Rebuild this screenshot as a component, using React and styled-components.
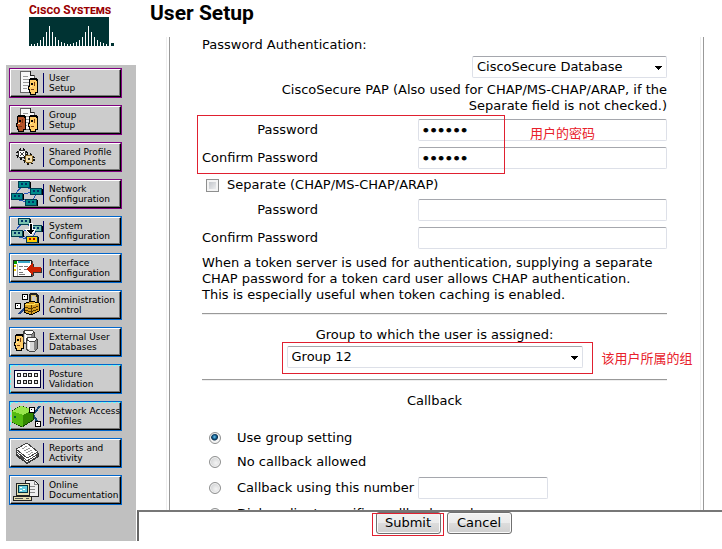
import React from "react";
import styled, { createGlobalStyle } from "styled-components";

const GlobalStyle = createGlobalStyle`
    * {
        box-sizing: border-box;
    }

    body {
        margin: 0;
        background: #fff;
        color: #000;
        font: 13px/16px "DejaVu Sans", sans-serif;
    }
`;

const bars = [2, 2, 3, 6, 9, 14, 20, 14, 9, 6, 4, 3, 2, 2, 3, 4, 6, 9, 14, 20, 14, 9, 6, 4, 3, 2];

const Face = ({ x, y, fill }) => (
    <g transform={`translate(${x} ${y})`}>
        <path d="M1 2h1V1h6v1h1v13H7v2H2v-2H1v-3H0V9h1z" fill={fill} stroke="#000" />
        <path d="M2 1h7v3H8V3H2zM3 6h2v2H3z" fill="#000" />
        <path d="M6 5h1v4H6zM3 12h3v1H3z" fill="#7a3a10" />
        <path d="M2 9h2v1H2z" fill="#ffe9a8" />
    </g>
);

const Sheet = ({ x, y }) => (
    <g transform={`translate(${x} ${y})`}>
        <path d="M1 1h10l4 4v17H1z" fill="#777" />
        <path d="M0 0h10l4 4v17H0z" fill="#f8f8f8" stroke="#666" />
        <path d="M10 0v4h4" fill="#ccc" stroke="#222" />
        <path d="M3 5h5M3 8h8M3 11h7M3 14h8M3 17h4" stroke="#999" />
    </g>
);

const Host = ({ x, y, fill = "#008c8c", eye = "#036" }) => (
    <g transform={`translate(${x} ${y})`}>
        <path d="M1 1h12v6H1z" fill="#000" />
        <path d="M0 0h11v6H0z" fill={fill} stroke="#003c50" />
        <path d="M3 2h2v2H3zM7 2h2v2H7z" fill={eye} />
    </g>
);

const Drum = ({ x, y }) => (
    <g transform={`translate(${x} ${y})`}>
        <path d="M0 2v10l3 2h6l2-2V2z" fill="#d8d8d8" stroke="#444" />
        <path d="M8 3h3v9l-3 1z" fill="#888" />
        <path d="M2 4h2v8H2z" fill="#fff" />
        <path d="M0 2l3-2h6l2 2-2 2H3z" fill="#fff" stroke="#444" />
    </g>
);

const icons = {
    user: (
        <>
            <Sheet x={9} y={1} />
            <Face x={17} y={7} fill="#ffcc66" />
        </>
    ),
    group: (
        <>
            <Sheet x={9} y={1} />
            <Face x={5} y={7} fill="#b5532a" />
            <path d="M14 10v13" stroke="#000" />
            <Face x={17} y={7} fill="#ffcc66" />
        </>
    ),
    gears: (
        <>
            <circle cx="11" cy="10" r="5" fill="none" stroke="#111" strokeWidth="2" strokeDasharray="2 2" />
            <circle cx="11" cy="10" r="4" fill="#fff" stroke="#333" />
            <path d="M9 8l4 4M13 8l-4 4" stroke="#444" />
            <circle cx="18" cy="15" r="5" fill="none" stroke="#111" strokeWidth="2" strokeDasharray="2 2" />
            <circle cx="18" cy="15" r="4" fill="#f3dfae" stroke="#886622" />
            <circle cx="18" cy="15" r="1" fill="#fff" stroke="#333" />
        </>
    ),
    network: (
        <>
            <path d="M12 5l12 5-18 5 14 7 6-10M4 13L12 4M5 18l14 4" fill="none" stroke="#2455b8" />
            <Host x={7} y={0} />
            <Host x={19} y={7} />
            <Host x={0} y={12} />
            <Host x={14} y={18} />
        </>
    ),
    system: (
        <>
            <path d="M12 5l12 5-18 5 14 7 6-10M4 13L12 4M5 18l14 4" fill="none" stroke="#2455b8" />
            <Host x={7} y={0} fill="#79bfae" />
            <Host x={19} y={7} fill="#79bfae" />
            <Host x={0} y={12} fill="#79bfae" />
            <Host x={15} y={18} fill="#ffcc00" eye="#b40000" />
            <path d="M18 5h3v6h4l-5 6-6-6h4z" fill="#000" stroke="#fff" />
        </>
    ),
    form: (
        <>
            <path d="M3 6h19v16H3z" fill="#555" />
            <path d="M2 5h18v16H2z" fill="#fff" stroke="#222" />
            <path d="M3 6h3v3H3z" fill="#009900" />
            <path d="M7 6h12v2H7z" fill="#39a7c8" />
            <path d="M3 10h2v2H3zM3 14h2v2H3z" fill="#e8c800" />
            <path d="M8 11h4M8 14h2M13 14h3M8 17h4M13 11h4M8 19h6" stroke="#777" />
            <path d="M6 9v12" stroke="#aaa" />
            <path d="M16 15l7-6v4h8v5h-8v4z" fill="#333" />
            <path d="M15 14l7-6v4h8v5h-8v4z" fill="#cc2200" />
        </>
    ),
    admin: (
        <>
            <path d="M11 2h5v5h-5zM4 11h5v5H4z" fill="#fff" stroke="#000" />
            <path d="M13 4h1v1h-1zM6 13h1v1H6z" fill="#000" />
            <path d="M8 22l10-11" stroke="#224488" strokeWidth="2" />
            <path d="M19 11V4l2-2h3l2 2v6" fill="none" stroke="#222" strokeWidth="3" />
            <path d="M20 11V4l2-1h2l1 2v6" fill="none" stroke="#ddc060" />
            <path d="M13 12l7-3 8 2v8l-8 4-7-3z" fill="#d8a020" stroke="#000" />
            <path d="M14 15l6 2 7-3M14 18l6 2 7-3M20 13v9" stroke="#5a3a00" fill="none" />
            <path d="M14 12l6 1 7-2" stroke="#ffdd55" fill="none" />
        </>
    ),
    external: (
        <>
            <Face x={3} y={4} fill="#ffcc66" />
            <Drum x={12} y={1} />
            <Drum x={15} y={8} />
        </>
    ),
    posture: (
        <>
            <path d="M4 5h26v17H4z" fill="#555" />
            <path d="M3 4h26v17H3z" fill="#fff" stroke="#000033" />
            {[6, 12, 17, 23].map((x) => (
                <g key={x}>
                    <path d={`M${x} 7h4v4h-4zM${x} 14h4v4h-4z`} fill="#222" />
                    <path d={`M${x + 1} 8h2v2h-2zM${x + 1} 15h2v2h-2z`} fill="#ddd" />
                </g>
            ))}
        </>
    ),
    profiles: (
        <>
            <path d="M19 15l10-12M20 8l7 12" stroke="#164a78" strokeWidth="2" />
            <path d="M1 8l9-5 12 4v10l-11 7-10-5z" fill="#338800" stroke="#114400" />
            <path d="M1 8l9-5 12 4-10 5z" fill="#99e64d" />
            <path d="M1 8l11 4v12L1 19z" fill="#55bb11" />
            <path d="M3 13h2v2H3z" fill="#063" />
            <path d="M18 4h5v5h-5zM24 18h5v5h-5z" fill="#fff" stroke="#000" />
            <path d="M20 6h1v1h-1zM26 20h1v1h-1z" fill="#000" />
        </>
    ),
    reports: (
        <>
            <path d="M5 10v6l11 8 12-7v-4z" fill="#333" />
            <path d="M5 13l11-6 11 9-11 7z" fill="#fff" stroke="#444" />
            <path d="M5 11l11-6 11 9-11 7z" fill="#fff" stroke="#444" />
            <path d="M5 9l11-6 11 9-11 6z" fill="#fff" stroke="#444" />
            <path d="M11 9l5-3M13 11l6-3M15 13l6-3M17 15l5-3" stroke="#999" />
        </>
    ),
    online: (
        <>
            <path d="M14 3h9l4 4v12H14z" fill="#eee" stroke="#222" />
            <path d="M23 3v4h4M17 9h7M17 12h7M17 15h7" stroke="#888" fill="none" />
            <path d="M5 6h13v12H5z" fill="#e6dfb0" stroke="#222" />
            <path d="M7 8h9v7H7z" fill="#66ccdd" stroke="#003344" />
            <path d="M9 10h2M12 12h2M9 13h2" stroke="#fff" />
            <path d="M2 19h18v4H2z" fill="#e6dfb0" stroke="#222" />
            <path d="M4 21h8M15 21h3" stroke="#555" />
        </>
    ),
};

const links = [
    { icon: "user", first: "User", second: "Setup", visited: true },
    { icon: "group", first: "Group", second: "Setup", visited: true },
    { icon: "gears", first: "Shared Profile", second: "Components", visited: true },
    { icon: "network", first: "Network", second: "Configuration", visited: true },
    { icon: "system", first: "System", second: "Configuration" },
    { icon: "form", first: "Interface", second: "Configuration" },
    { icon: "admin", first: "Administration", second: "Control" },
    { icon: "external", first: "External User", second: "Databases" },
    { icon: "posture", first: "Posture", second: "Validation", dotted: true },
    { icon: "profiles", first: "Network Access", second: "Profiles", dotted: true },
    { icon: "reports", first: "Reports and", second: "Activity" },
    { icon: "online", first: "Online", second: "Documentation" },
];

function Sidebar() {
    return (
        <StyledSidebar>
            <Brand>
                <BrandName>Cisco Systems</BrandName>
                <svg width="85" height="29" shapeRendering="crispEdges" aria-hidden="true">
                    <rect width="80" height="29" fill="#003333" />
                    {bars.map((h, i) => (
                        <rect key={i} x={2 + i * 3} y={29 - h} width="1" height={h} fill="#fff" />
                    ))}
                    <rect x="82" y="26" width="3" height="3" fill="#003333" />
                </svg>
            </Brand>
            <Nav>
                {links.map(({ icon, first, second, visited, dotted }) => (
                    <NavLink href="#" key={icon} $visited={visited}>
                        <NavFace $dotted={dotted}>
                            <svg width="32" height="26" shapeRendering="crispEdges" aria-hidden="true">
                                {icons[icon]}
                            </svg>
                            <NavText>{first}<br />{second}</NavText>
                        </NavFace>
                    </NavLink>
                ))}
            </Nav>
        </StyledSidebar>
    );
}

function Dropdown({ id, label, value, width }) {
    return (
        <SelectWrap $width={width}>
            <Select id={id} aria-label={label} defaultValue={value}>
                <option>{value}</option>
            </Select>
            <svg width="8" height="4" shapeRendering="crispEdges" aria-hidden="true">
                <path d="M0 0h8L4 4z" />
            </svg>
        </SelectWrap>
    );
}

function PasswordPair({ name, value }) {
    return (
        <Fields>
            <label htmlFor={name}>Password</label>
            <PasswordInput id={name} type="password" defaultValue={value} />
            <label htmlFor={`${name}-confirm`}>Confirm Password</label>
            <PasswordInput id={`${name}-confirm`} type="password" defaultValue={value} />
        </Fields>
    );
}

function App() {
    return (
        <>
            <GlobalStyle />
            <Page>
                <Sidebar />
                <Main>
                    <Title>User Setup</Title>
                    <Viewport>
                        <Frame>
                            <Cell>
                                <div>Password Authentication:</div>
                                <SourceRow>
                                    <Dropdown label="Password Authentication" value="CiscoSecure Database" width="195px" />
                                    <div>CiscoSecure PAP (Also used for CHAP/MS-CHAP/ARAP, if the Separate field is not checked.)</div>
                                </SourceRow>
                                <Marked>
                                    <PasswordPair name="pap" value="secret" />
                                    <PasswordMark />
                                    <PasswordNote>用户的密码</PasswordNote>
                                </Marked>
                                <Separate>
                                    <Tick id="separate" type="checkbox" />
                                    <label htmlFor="separate">Separate (CHAP/MS-CHAP/ARAP)</label>
                                </Separate>
                                <PasswordPair name="chap" />
                                <Help>
                                    When a token server is used for authentication, supplying a separate CHAP password for a token card user allows CHAP authentication.<br />
                                    This is especially useful when token caching is enabled.
                                </Help>
                                <Rule />
                                <GroupRow>
                                    <label htmlFor="group">Group to which the user is assigned:</label>
                                    <Marked>
                                        <Dropdown id="group" value="Group 12" width="296px" />
                                        <GroupMark />
                                        <GroupNote>该用户所属的组</GroupNote>
                                    </Marked>
                                </GroupRow>
                                <Rule />
                                <Heading>Callback</Heading>
                                <Options>
                                    <Option><Radio type="radio" name="callback" defaultChecked />Use group setting</Option>
                                    <Option><Radio type="radio" name="callback" />No callback allowed</Option>
                                    <OptionLine>
                                        <Option><Radio type="radio" name="callback" />Callback using this number</Option>
                                        <NumberInput type="text" aria-label="Callback number" />
                                    </OptionLine>
                                    <Option><Radio type="radio" name="callback" />Dialup client specifies callback number</Option>
                                </Options>
                            </Cell>
                        </Frame>
                    </Viewport>
                    <Actions>
                        <Marked>
                            <Button type="button">Submit</Button>
                            <SubmitMark />
                        </Marked>
                        <Button type="button">Cancel</Button>
                    </Actions>
                </Main>
            </Page>
        </>
    );
}

const Page = styled.div`
    display: grid;
    grid-template-columns: 130px minmax(0, 1fr);
    height: 100vh;
    padding: 0 0 8px 6px;
    overflow: hidden;
`;

const StyledSidebar = styled.aside`
    display: flex;
    flex-direction: column;
    min-height: 0;
`;

const Brand = styled.div`
    flex: none;
    height: 65px;
    padding: 2px 0 0 23px;

    svg {
        display: block;
    }
`;

const BrandName = styled.div`
    height: 15px;
    color: #990000;
    font: bold 12px/16px Roboto, "Liberation Sans", sans-serif;
    font-variant: small-caps;
    white-space: nowrap;
`;

const Nav = styled.nav`
    display: flex;
    flex: 1;
    flex-direction: column;
    align-items: flex-start;
    gap: 7px;
    padding: 3px;
    background: #c0c0c0;
`;

const NavLink = styled.a`
    width: 113px;
    height: 30px;
    border: 1px solid ${({ $visited }) => ($visited ? "#800080" : "#0066cc")};
    color: #000;
    text-decoration: none;
`;

const NavFace = styled.span`
    display: flex;
    align-items: center;
    height: 28px;
    border: 1px ${({ $dotted }) => ($dotted ? "dashed #66ffff" : "solid #fff")};
    border-right: 1px solid #000;
    border-bottom: 1px solid #000;
    background: #cccccc;
    box-shadow: inset -1px -1px 0 #777777;

    svg {
        flex: none;
        height: 26px;
    }
`;

const NavText = styled.span`
    padding-left: 5px;
    border-left: 1px solid #000066;
    font-size: 9px;
    line-height: 10px;
    white-space: nowrap;
`;

const Main = styled.main`
    display: flex;
    flex-direction: column;
    min-height: 0;
`;

const Title = styled.h1`
    flex: none;
    height: 37px;
    margin: 0;
    padding-left: 14px;
    font: bold 21px/26px Roboto, "Liberation Sans", sans-serif;
`;

const Viewport = styled.div`
    flex: 1;
    min-height: 0;
    padding: 0 18px 0 30px;
    overflow: hidden;
`;

// bordered table look: a light and a grey line on each side
const Frame = styled.div`
    padding: 0 2px;
    border-left: 1px solid #eeeeee;
    border-right: 1px solid #999999;
`;

const Cell = styled.form`
    padding: 0 33px 0 32px;
    border-left: 1px solid #999999;
    border-right: 1px solid #eeeeee;
`;

const SourceRow = styled.div`
    display: flex;
    flex-direction: column;
    align-items: flex-end;
    gap: 4px;
    padding: 3px 0 5px 60px;
    text-align: right;
`;

const SelectWrap = styled.div`
    position: relative;
    width: ${({ $width }) => $width};
    height: 22px;

    svg {
        position: absolute;
        right: 5px;
        top: 10px;
        pointer-events: none;
    }
`;

const Input = styled.input`
    width: 100%;
    height: 22px;
    padding: 0 3px;
    border: 1px solid #dde0e8;
    border-top-color: #a5a7ad;
    border-radius: 2px;
    background: #fff;
    color: #000;
    font: 13px/16px "DejaVu Sans", sans-serif;
`;

// heavier bullets
const PasswordInput = styled(Input)`
    -webkit-text-stroke: 1px #000;
`;

const Select = styled(Input).attrs({ as: "select" })`
    appearance: none;
    padding: 0 4px;
`;

const NumberInput = styled(Input)`
    width: 130px;
`;

const Marked = styled.div`
    position: relative;
`;

const Mark = styled.span`
    position: absolute;
    border: 1px solid #e02030;
    pointer-events: none;
`;

const PasswordMark = styled(Mark)`
    top: -4px;
    left: -5px;
    width: 308px;
    height: 59px;
`;

const GroupMark = styled(Mark)`
    inset: -4px -10px -6px -5px;
`;

const SubmitMark = styled(Mark)`
    inset: 1px -3px 5px -4px;
`;

const Note = styled.span`
    position: absolute;
    color: #e8202a;
    font: 13px/16px "Noto Sans CJK SC", sans-serif;
    white-space: nowrap;
`;

const PasswordNote = styled(Note)`
    top: 6px;
    left: 328px;
`;

const GroupNote = styled(Note)`
    top: 4px;
    left: 315px;
`;

const Fields = styled.div`
    display: grid;
    grid-template-columns: 116px 1fr;
    gap: 6px 100px;
    align-items: center;

    label {
        text-align: right;
        white-space: nowrap;
    }
`;

const Separate = styled.div`
    display: flex;
    align-items: center;
    gap: 8px;
    height: 30px;
    padding: 2px 0 0 4px;
`;

const Tick = styled.input`
    appearance: none;
    width: 13px;
    height: 13px;
    margin: 0;
    border: 1px solid #8e8f8f;
    background: linear-gradient(135deg, #b8bcc2, #f6f6f6);
    box-shadow: inset 0 0 0 2px #f4f4f4;
`;

const Help = styled.p`
    margin: 6px 0 10px;
`;

const Rule = styled.hr`
    height: 2px;
    margin: 0;
    border: 0;
    border-top: 1px solid #999999;
    border-bottom: 1px solid #eeeeee;
`;

const GroupRow = styled.div`
    display: flex;
    flex-direction: column;
    align-items: center;
    gap: 3px;
    padding: 12px 0 11px;
`;

const Heading = styled.div`
    padding: 12px 0 20px;
    text-align: center;
`;

const Options = styled.div`
    display: flex;
    flex-direction: column;
    gap: 6px;
    padding-left: 7px;
`;

const Option = styled.label`
    display: flex;
    align-items: center;
    gap: 16px;
    min-height: 18px;
    white-space: nowrap;
`;

const OptionLine = styled.div`
    display: flex;
    align-items: center;
    gap: 4px;
`;

const Radio = styled.input`
    appearance: none;
    width: 12px;
    height: 12px;
    margin: 0;
    border: 1px solid #8e8f8f;
    border-radius: 50%;
    background: radial-gradient(circle at 60% 60%, #f4f4f4, #c4c6c8);
    box-shadow: inset 0 0 0 1px #f4f4f4;

    &:checked {
        background: radial-gradient(circle at 45% 40%, #6cc8ee 0, #125a8c 2px, #0b2e4a 3px, #f4f4f4 4px);
    }
`;

const Actions = styled.footer`
    display: flex;
    flex: none;
    justify-content: center;
    gap: 6px;
    height: 31px;
    margin-left: 1px;
    padding-left: 26px;
    border-top: 2px solid #777777;
    border-left: 2px solid #666666;
`;

const Button = styled.button`
    display: block;
    width: 65px;
    height: 22px;
    padding: 0;
    border: 1px solid #707070;
    border-radius: 3px;
    background: linear-gradient(#f2f2f2 0, #ebebeb 50%, #dddddd 50%, #cfcfcf 100%);
    box-shadow: inset 0 0 0 1px #fafafa;
    color: #000;
    font: 13px/16px "DejaVu Sans", sans-serif;
`;

export default App;
